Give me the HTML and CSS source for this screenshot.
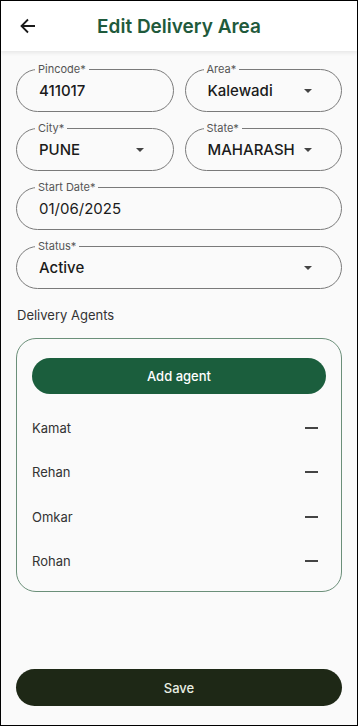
FILE: index.html
```html
<!DOCTYPE html>
<html lang="en">
<head>
  <meta charset="UTF-8" />
  <meta name="viewport" content="width=device-width, initial-scale=1.0"/>
  <title>Edit Delivery Area</title>
  <link rel="stylesheet" href="styles.css">
</head>
<body>
  <div class="screen">
    <header class="appbar">
      <button class="back" aria-label="Back">
        <svg width="16" height="16" viewBox="0 0 16 16"><path d="M15 8H2M8 1.5L1.5 8 8 14.5" fill="none" stroke="#1a1a1a" stroke-width="1.8"/></svg>
      </button>
      <h1>Edit Delivery Area</h1>
    </header>

    <main class="content">
      <div class="row">
        <fieldset class="field">
          <legend>Pincode*</legend>
          <div class="value">411017</div>
        </fieldset>
        <fieldset class="field select">
          <legend>Area*</legend>
          <div class="value">Kalewadi</div>
          <span class="caret"></span>
        </fieldset>
      </div>

      <div class="row">
        <fieldset class="field select">
          <legend>City*</legend>
          <div class="value">PUNE</div>
          <span class="caret"></span>
        </fieldset>
        <fieldset class="field select">
          <legend>State*</legend>
          <div class="value">MAHARASH</div>
          <span class="caret"></span>
        </fieldset>
      </div>

      <fieldset class="field">
        <legend>Start Date*</legend>
        <div class="value date">01/06/2025</div>
      </fieldset>

      <fieldset class="field select">
        <legend>Status*</legend>
        <div class="value">Active</div>
        <span class="caret"></span>
      </fieldset>

      <p class="section-title">Delivery Agents</p>

      <div class="agents">
        <button class="add-btn">Add agent</button>
        <ul class="agent-list">
          <li><span>Kamat</span><span class="remove"></span></li>
          <li><span>Rehan</span><span class="remove"></span></li>
          <li><span>Omkar</span><span class="remove"></span></li>
          <li><span>Rohan</span><span class="remove"></span></li>
        </ul>
      </div>

      <button class="save-btn">Save</button>
    </main>
  </div>
</body>
</html>
```

FILE: styles.css
```css
* {
  box-sizing: border-box;
}

html, body {
  margin: 0;
  padding: 0;
}

body {
  font-family: Inter, "Noto Sans", sans-serif;
  background: #fff;
}

.screen {
  height: 726px;
  border: 1px solid #000;
  background: #fafafa;
  display: flex;
  flex-direction: column;
}

.appbar {
  height: 50px;
  background: #fff;
  display: flex;
  align-items: center;
  justify-content: center;
  box-shadow: 0 2px 4px rgba(0,0,0,0.08);
  position: relative;
  z-index: 1;
}

.back {
  position: absolute;
  left: 18px;
  top: 17px;
  background: none;
  border: none;
  padding: 0;
  width: 18px;
  height: 18px;
}

.appbar h1 {
  margin: 0;
  font-size: 19px;
  font-weight: 600;
  color: #1f5a3c;
}

.content {
  flex: 1;
  display: flex;
  flex-direction: column;
  padding: 12px 15px 19px 15px;
}

.row {
  display: flex;
  gap: 11px;
}

.row .field {
  flex: 1;
  min-width: 0;
}

.field {
  margin: 0 0 10px 0;
  padding: 0 22px 10px 22px;
  border: 1px solid #7a7a7a;
  border-radius: 24px;
  position: relative;
  display: flex;
  align-items: center;
}

.field legend {
  font-size: 11px;
  line-height: 12px;
  color: #555;
  padding: 0 3px;
  margin-left: -4px;
}

.value {
  flex: 1;
  margin-top: 6px;
  font-size: 15px;
  line-height: 20px;
  font-weight: 500;
  color: #1b1b1b;
  white-space: nowrap;
  overflow: hidden;
}

.value.date {
  font-weight: 400;
}

.caret {
  margin-top: 6px;
  margin-right: 7px;
  width: 0;
  height: 0;
  border-left: 4.5px solid transparent;
  border-right: 4.5px solid transparent;
  border-top: 4.5px solid #444;
}

.section-title {
  margin: 8px 0 15px 1px;
  font-size: 13px;
  color: #333;
}

.agents {
  border: 1px solid #6b8f79;
  border-radius: 20px;
  padding: 19px 15px 8px 15px;
}

.add-btn, .save-btn {
  display: block;
  width: 100%;
  border: none;
  border-radius: 20px;
  font-family: inherit;
  font-size: 13px;
  font-weight: 500;
  cursor: pointer;
}

.add-btn {
  height: 36px;
  background: #1b5e3d;
  color: #fff;
}

.agent-list {
  list-style: none;
  margin: 12px 0 0 0;
  padding: 0;
}

.agent-list li {
  height: 44.3px;
  display: flex;
  align-items: center;
  justify-content: space-between;
  font-size: 13px;
  color: #333;
}

.remove {
  width: 13px;
  height: 2px;
  background: #444;
  margin-right: 8px;
}

.save-btn {
  margin-top: auto;
  height: 37px;
  background: #1e2816;
  color: #e9efe3;
}
```
